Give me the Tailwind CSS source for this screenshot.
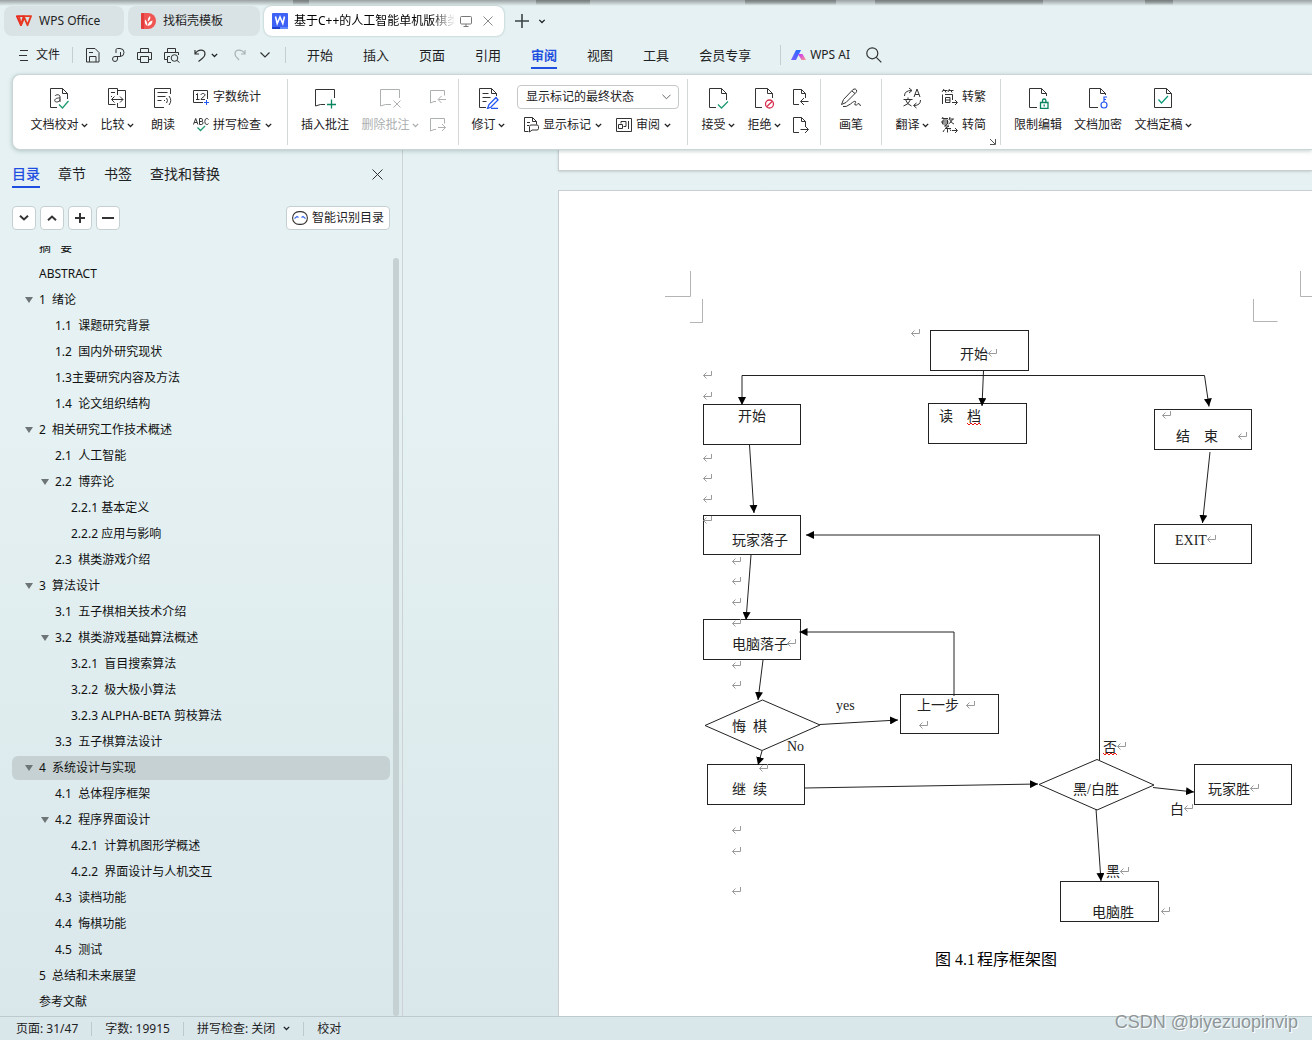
<!DOCTYPE html>
<html lang="zh-CN">
<head>
<meta charset="utf-8">
<title>WPS Office</title>
<script src="https://cdn.jsdelivr.net/npm/@tailwindcss/browser@4"></script>
</head>
<body class="h-screen overflow-hidden flex flex-col bg-linear-to-b from-[#e5f1f2] from-40% to-[#d9e7eb] font-['Noto_Sans','Noto_Sans_CJK_SC',sans-serif] text-xs text-[#1e2224]">

<svg class="hidden" aria-hidden="true">
  <symbol id="chev" viewBox="0 0 7 5"><path d="M.8 .9L3.5 3.5 6.2 .9" fill="none" stroke="currentColor" stroke-width="1.3"/></symbol>
  <symbol id="tri" viewBox="0 0 8 6"><path d="M0 0h8L4 6z" fill="#6d7577"/></symbol>
</svg>

<!-- tab strip -->
<header class="relative shrink-0">
  <div class="absolute inset-x-0 top-0 h-[6px] bg-linear-to-b from-[#9aa1a2] to-transparent" aria-hidden="true"></div>
  <div class="absolute top-0 left-[293px] w-4 h-[5px] bg-linear-to-b from-[#777c7c] to-transparent" aria-hidden="true"></div>
  <div class="absolute top-0 left-[536px] w-[54px] h-[5px] bg-linear-to-b from-[#777c7c] to-transparent" aria-hidden="true"></div>
  <div class="absolute top-0 left-[745px] w-[91px] h-[5px] bg-linear-to-b from-[#777c7c] to-transparent" aria-hidden="true"></div>
  <div class="absolute top-0 left-[875px] w-[168px] h-[5px] bg-linear-to-b from-[#777c7c] to-transparent" aria-hidden="true"></div>
  <div class="absolute top-0 left-[1145px] w-7 h-[5px] bg-linear-to-b from-[#777c7c] to-transparent" aria-hidden="true"></div>
  <div class="relative flex items-center gap-1 pl-1 pt-[6px] h-9">
    <button class="w-[120px] h-[30px] rounded-lg bg-[#d9e2e4] flex items-center gap-[7px] pl-3">
      <svg class="w-4 h-3" viewBox="0 0 16 12" fill="none"><path d="M.8 1.2h7l-2.9 9z" stroke="#e8281f" stroke-width="1.8" stroke-linejoin="round"/><path d="M3 1.2l2 9 3.3-7.5 3.2 7.5L15 1.2H7.4" stroke="#e8381f" stroke-width="1.8" stroke-linejoin="round"/></svg>
      <span>WPS Office</span>
    </button>
    <button class="w-[132px] h-[30px] rounded-lg bg-[#d9e2e4] flex items-center gap-[7px] pl-[13px]">
      <svg class="w-[15px] h-4" viewBox="0 0 15 16"><path d="M1 0h6a8 8 0 0 1 0 16H1a1 1 0 0 1-1-1V1a1 1 0 0 1 1-1z" fill="#ef5552"/><path d="M0 1a1 1 0 0 1 1-1h2v16H1a1 1 0 0 1-1-1z" fill="#e23c3d"/><path d="M6.500 13C3.800 11.500 3.500 9 4 6.500 5.500 7.500 6.300 9 6.500 13z M6.800 13c0-2.500 1.500-5 4.700-5.500C11.500 10.500 10 12.500 6.800 13z M7 8.500c-.6-2 .4-4.200 2-5.500.8 1.700.6 3.300-2 5.500z" fill="#fff"/></svg>
      <span>找稻壳模板</span>
    </button>
    <div class="w-[240px] h-[30px] rounded-lg bg-white shadow-[0_0_2px_rgba(90,120,120,.55)] flex items-center pl-2">
      <svg class="w-4 h-4 shrink-0" viewBox="0 0 16 16"><rect width="16" height="16" rx="1" fill="#3d62f5"/><path d="M0 14h8v2H1a1 1 0 0 1-1-1z" fill="#1c3fd0"/><path d="M8 14h8v1a1 1 0 0 1-1 1H8z" fill="#5f8bff"/><path d="M3.500 3.500l1.700 7L8 4l2.800 6.500 1.700-7" fill="none" stroke="#fff" stroke-width="1.600"/></svg>
      <span class="ml-[6px] w-[161px] overflow-hidden whitespace-nowrap mask-r-from-85% text-black">基于C++的人工智能单机版棋类</span>
      <button class="ml-[5px]" aria-label="窗口"><svg class="w-3 h-3" viewBox="0 0 12 12" fill="none" stroke="#777"><rect x=".5" y="1.500" width="11" height="7.500" rx="1"/><path d="M3.500 11.500h5M6 9v2"/></svg></button>
      <button class="ml-[11px]" aria-label="关闭"><svg class="w-[10px] h-[10px]" viewBox="0 0 10 10" stroke="#8a8a8a" fill="none"><path d="M.5.5l9 9M9.500.5l-9 9"/></svg></button>
    </div>
    <button class="ml-[7px]" aria-label="新建"><svg class="w-[14px] h-[14px]" viewBox="0 0 14 14" stroke="#3d4446" stroke-width="1.600"><path d="M7 0v14M0 7h14"/></svg></button>
    <button class="ml-[5px]" aria-label="更多"><svg class="w-2 h-[5px]"><use href="#chev"/></svg></button>
  </div>
</header>

<!-- menu bar -->
<nav class="shrink-0 h-[38px] flex items-center pl-[19px]">
  <button class="flex items-center gap-2"><svg class="w-[9px] h-3" viewBox="0 0 9 12" stroke="#333" stroke-width="1"><path d="M1 1.500h8M0 6.500h8M1 11.500h8"/></svg><span>文件</span></button>
  <span class="ml-3 w-px h-4 bg-[#c3cfd0]"></span>
  <button class="ml-3" aria-label="保存"><svg class="w-[15px] h-[15px]" viewBox="0 0 15 15" fill="none" stroke="#333"><path d="M1.500.5h8.500l4 4v9.500h-12.500z"/><path d="M4.500 14V8.500h6.500V14M4 4.500h4"/></svg></button>
  <button class="ml-3" aria-label="输出为PDF"><svg class="w-[13px] h-[15px]" viewBox="0 0 13 15" fill="none" stroke="#333"><path d="M4 5V2c0-1 .5-1.500 1.500-1.500H8a4 4 0 0 1 0 8H3a2.500 2.500 0 1 0 2.500 2.500V8.500M8.500 4v4.500"/></svg></button>
  <button class="ml-3" aria-label="打印"><svg class="w-[15px] h-[15px]" viewBox="0 0 15 15" fill="none" stroke="#333"><path d="M3.500 4.500v-4h8v4M3.500 11.500h-3v-7h14v7h-3M3.500 8.500h8v6h-8z"/></svg></button>
  <button class="ml-3" aria-label="打印预览"><svg class="w-4 h-[15px]" viewBox="0 0 16 15" fill="none" stroke="#333"><path d="M3.500 4.500v-4h8v4M3 11.500H.5v-7h14V7M3.500 14.500V8.500H6M3.500 14.500H7"/><circle cx="10.500" cy="10" r="3.300"/><path d="M13 12.500l2.500 2"/></svg></button>
  <button class="ml-[14px]" aria-label="撤销"><svg class="w-3 h-[13px]" viewBox="0 0 12 13" fill="none" stroke="#333" stroke-width="1.200"><path d="M1 1v4h4M1.200 4.800C3 2 5 1.200 7 1.200c5 0 5 5.300 1.500 8L4.500 12.500"/></svg></button>
  <button class="ml-[5px]" aria-label="撤销列表"><svg class="w-[7px] h-[5px]"><use href="#chev"/></svg></button>
  <button class="ml-4" aria-label="恢复"><svg class="w-3 h-[13px]" viewBox="0 0 12 13" fill="none" stroke="#a9b3b4" stroke-width="1.200"><path d="M11 1v4H7M10.800 4.800C9 2 7 1.200 5 1.200c-5 0-5 5.300-1.500 8L5 11"/></svg></button>
  <button class="ml-[14px]" aria-label="自定义"><svg class="w-[10px] h-[6px]" viewBox="0 0 10 6" fill="none" stroke="#333" stroke-width="1.200"><path d="M.5.5L5 5 9.500.5"/></svg></button>
  <span class="ml-[15px] w-px h-4 bg-[#c3cfd0]"></span>
  <div class="ml-[21px] flex gap-[30px] text-[13px] leading-5 pt-1">
    <a href="#" class="h-6">开始</a><a href="#" class="h-6">插入</a><a href="#" class="h-6">页面</a><a href="#" class="h-6">引用</a>
    <a href="#" class="h-6 font-bold text-[#1f4fe0] border-b-2 border-[#1f4fe0]">审阅</a>
    <a href="#" class="h-6">视图</a><a href="#" class="h-6">工具</a><a href="#" class="h-6">会员专享</a>
  </div>
  <span class="ml-[29px] w-px h-5 bg-[#c3cfd0]"></span>
  <button class="ml-[10px] flex items-center gap-1">
    <svg class="w-[15px] h-3" viewBox="0 0 15 12"><defs><linearGradient id="ai1" x1="0" y1="1" x2="1" y2="0"><stop stop-color="#7a5cff"/><stop offset="1" stop-color="#1b6dff"/></linearGradient><linearGradient id="ai2" x1="0" y1="0" x2="1" y2="1"><stop stop-color="#c22cff"/><stop offset="1" stop-color="#ff9b8a"/></linearGradient></defs><path d="M0 11L5 1h5L5 11z" fill="url(#ai1)"/><path d="M7 5h4.500l3.500 6h-4.500z" fill="url(#ai2)"/></svg>
    <span>WPS AI</span></button>
  <button class="ml-4" aria-label="搜索"><svg class="w-4 h-4" viewBox="0 0 16 16" fill="none" stroke="#333" stroke-width="1.200"><circle cx="6.300" cy="6.300" r="5.500"/><path d="M10.300 10.300l5 5"/></svg></button>
</nav>

<!-- ribbon -->
<section class="relative z-10 shrink-0 ml-3 h-[76px] rounded-l-lg bg-white border border-r-0 border-[#c9d5d6] shadow-[0_1px_4px_rgba(80,110,110,.35)] flex items-stretch py-1 overflow-hidden whitespace-nowrap">
  <div class="w-[275px] shrink-0 flex border-r border-[#d4d8d9] pl-[11px]">
    <button class="w-[70px] flex flex-col items-center pt-2 gap-2">
      <svg class="w-[22px] h-[22px] shrink-0" viewBox="0 0 22 22" fill="none" stroke="#333"><path d="M9 20.500H2.500v-19h12l5 5V12M14.500 1.500v5h5"/><path d="M7 9c1-1.800 5-1.800 5 .8V15M12 11c-6-.5-6.500 4-3.500 4 1.500 0 3.500-1 3.500-2.500"/><path d="M11 17.500l3.500 3.500L20.500 14" stroke="#1f9a75" stroke-width="1.300"/></svg>
      <span class="flex items-center gap-[2px]">文档校对<svg class="w-[7px] h-[5px]"><use href="#chev"/></svg></span></button>
    <button class="w-[46px] flex flex-col items-center pt-2 gap-2">
      <svg class="w-[22px] h-[22px] shrink-0" viewBox="0 0 22 22" fill="none" stroke="#333"><path d="M9.500 17.500h-7v-16h9V8M11.500 3.500h8v17h-8V16M5 5.500h4M5 9.500h1"/><path d="M6 12.500h11M8.500 9.500L5.500 12.500l3 3M14 9.500l3 3-3 3"/></svg>
      <span class="flex items-center gap-[2px]">比较<svg class="w-[7px] h-[5px]"><use href="#chev"/></svg></span></button>
    <button class="w-[46px] flex flex-col items-center pt-2 gap-2">
      <svg class="w-[22px] h-[22px] shrink-0" viewBox="0 0 22 22" fill="none" stroke="#333"><path d="M12 20.500H2.500v-19h16V7M5.500 5.500h10M5.500 9.500h8M5.500 13.500h4"/><path d="M12.500 13v1M14.500 11q2 2.500 0 5M17 9q3.500 4.500 0 9"/></svg>
      <span>朗读</span></button>
    <div class="ml-[7px] flex flex-col pt-[6px] gap-1">
      <button class="h-6 flex items-center gap-1"><svg class="w-4 h-4" viewBox="0 0 16 16" fill="none" stroke="#333"><path d="M10 13.500H.5v-12h14V10"/><path d="M3 6l1.500-1.500V11M3 10.500h3.500M8 6c0-2 4-2 4 0 0 1.500-4 3-4 4.500h4"/><path d="M13.500 11v5M11 13.500h5" stroke="#2457f0"/></svg>字数统计</button>
      <button class="h-6 flex items-center gap-1"><svg class="w-4 h-4" viewBox="0 0 16 16" fill="none" stroke="#333"><path d="M.5 7.500L2.700 1.500l2.200 6M1.200 5.500h3M6.500 1.500v6h2.200q1.300-.2 1.300-1.700T8.500 4.500h-2M8.500 4.500q1.200-.3 1-1.700T8.200 1.500H6.500M15.500 2.500q-.6-1-1.700-1-2 0-2 3t2 3q1.200 0 1.700-1"/><path d="M4.500 10.500l3 3 4.500-4.500" stroke="#1f9a75" stroke-width="1.300"/></svg>拼写检查<svg class="w-[7px] h-[5px]"><use href="#chev"/></svg></button>
    </div>
  </div>
  <div class="w-[171px] shrink-0 flex border-r border-[#d4d8d9] pl-[7px]">
    <button class="w-[60px] flex flex-col items-center pt-2 gap-2">
      <svg class="w-[22px] h-[22px] shrink-0" viewBox="0 0 22 22" fill="none" stroke="#333"><path d="M11 17.500H6.500L1.500 19v-16.500h19V11"/><path d="M17.500 12.500v9M13 17.500h9" stroke="#0b8460" stroke-width="1.300"/></svg>
      <span>插入批注</span></button>
    <button class="w-[70px] flex flex-col items-center pt-2 gap-2 text-[#adb0b1]" disabled>
      <svg class="w-[22px] h-[22px] shrink-0" viewBox="0 0 22 22" fill="none" stroke="#adb0b1"><path d="M12 17.500H6.500L1.500 19v-16.500h19V11M14.500 13.500l7 7M21.500 13.500l-7 7"/></svg>
      <span class="flex items-center gap-[2px]">删除批注<svg class="w-[7px] h-[5px]"><use href="#chev"/></svg></span></button>
    <div class="ml-[5px] flex flex-col pt-[6px] gap-1">
      <button class="h-6" aria-label="上一条批注" disabled><svg class="w-4 h-4" viewBox="0 0 16 16" fill="none" stroke="#adb0b1"><path d="M6 12.500H4L.5 14V1.500h14v5M16 10.500H8.500M11.500 7l-3.500 3.500 3.500 3.500"/></svg></button>
      <button class="h-6" aria-label="下一条批注" disabled><svg class="w-4 h-4" viewBox="0 0 16 16" fill="none" stroke="#adb0b1"><path d="M6 12.500H4L.5 14V1.500h14v5M8 10.500h7.500M12 7l3.500 3.500-3.500 3.500"/></svg></button>
    </div>
  </div>
  <div class="w-[229px] shrink-0 flex border-r border-[#d4d8d9] pl-[6px]">
    <button class="w-[46px] flex flex-col items-center pt-2 gap-2">
      <svg class="w-[22px] h-[22px] shrink-0" viewBox="0 0 22 22" fill="none" stroke="#333"><path d="M9 20.500H2.500v-19h12l5 5V9M14.500 1.500v5h5M5.500 6.500h6M5.500 10.500h8M5.500 14.500h4"/><path d="M10.500 21.500l1.500-4 7-7 2 2.500-7 7zM14 21.500h7" stroke="#2457f0" stroke-width="1.300"/></svg>
      <span class="flex items-center gap-[2px]">修订<svg class="w-[7px] h-[5px]"><use href="#chev"/></svg></span></button>
    <div class="ml-[6px] flex flex-col pt-[6px] gap-1">
      <label class="relative block"><select aria-label="标记显示方式" class="block appearance-none w-[162px] h-6 rounded border border-[#c4c8c9] bg-white pl-2 text-xs leading-4"><option>显示标记的最终状态</option></select><svg class="absolute right-2 top-[9px] w-[9px] h-[6px] pointer-events-none" viewBox="0 0 10 6" fill="none" stroke="#555"><path d="M.5.5L5 5 9.500.5"/></svg></label>
      <div class="flex pl-[7px] gap-[14px]">
        <button class="h-6 flex items-center gap-[3px]"><svg class="w-4 h-4" viewBox="0 0 16 16" fill="none" stroke="#333"><path d="M4.500 14.500h-4v-14h8l4 4v3M8.500.5v4h4M3 5.500h3M3 8.500h2M5.500 15V9.500q0-1.500 1.500-1.500h6q1.500 0 1.500 1.500v2q0 1.500-1.500 1.500H8z"/></svg>显示标记<svg class="w-[7px] h-[5px] ml-px"><use href="#chev"/></svg></button>
        <button class="h-6 flex items-center gap-1"><svg class="w-4 h-4" viewBox="0 0 16 16" fill="none" stroke="#333"><path d="M.5 1.500h15v13H.5zM12.500 4v8M5 6.500V4.500h5v5H7.500M2.500 7.500h4v4h-4z"/></svg>审阅<svg class="w-[7px] h-[5px]"><use href="#chev"/></svg></button>
      </div>
    </div>
  </div>
  <div class="w-[133px] shrink-0 flex border-r border-[#d4d8d9] pl-[7px]">
    <button class="w-[46px] flex flex-col items-center pt-2 gap-2">
      <svg class="w-[22px] h-[22px] shrink-0" viewBox="0 0 22 22" fill="none" stroke="#333"><path d="M9 20.500H2.500v-19h12l5 5V13M14.500 1.500v5h5"/><path d="M11 17.500l3.500 3.500L21 14.500" stroke="#1f9a75" stroke-width="1.300"/></svg>
      <span class="flex items-center gap-[2px]">接受<svg class="w-[7px] h-[5px]"><use href="#chev"/></svg></span></button>
    <button class="w-[46px] flex flex-col items-center pt-2 gap-2">
      <svg class="w-[22px] h-[22px] shrink-0" viewBox="0 0 22 22" fill="none" stroke="#333"><path d="M9 20.500H2.500v-19h12l5 5V11M14.500 1.500v5h5"/><g stroke="#d7304f" stroke-width="1.300"><circle cx="16.500" cy="17" r="4"/><path d="M13.700 19.800l5.600-5.600"/></g></svg>
      <span class="flex items-center gap-[2px]">拒绝<svg class="w-[7px] h-[5px]"><use href="#chev"/></svg></span></button>
    <div class="ml-[6px] flex flex-col pt-[6px] gap-1">
      <button class="h-6" aria-label="上一条修订"><svg class="w-4 h-4" viewBox="0 0 16 16" fill="none" stroke="#333"><path d="M6 15.500H.5V.5h8l4 4V9M8.500.5v4h4M15.500 12.500H8M11 9l-3.500 3.500L11 16"/></svg></button>
      <button class="h-6" aria-label="下一条修订"><svg class="w-4 h-4" viewBox="0 0 16 16" fill="none" stroke="#333"><path d="M6 15.500H.5V.5h8l4 4V9M8.500.5v4h4M7.500 12.500H15M12 9l3.500 3.500L12 16"/></svg></button>
    </div>
  </div>
  <div class="w-[61px] shrink-0 flex border-r border-[#d4d8d9] pl-[7px]">
    <button class="w-[46px] flex flex-col items-center pt-2 gap-2">
      <svg class="w-[22px] h-[22px] shrink-0" viewBox="0 0 22 22" fill="none" stroke="#333"><path d="M1.500 17.500l2-5L13 2.500q2.500-1.500 3.500.5 .5 1.500-.5 2.500L6 15.500zM12 4l3 2.500M3 19.500q3 1 7.500-2.500 4-3.500 5-2.500.5 1-.5 2-1 2 1.500 1.500 1-.5 1.500-1.500 2 0 2.500 2.500"/></svg>
      <span>画笔</span></button>
  </div>
  <div class="relative w-[119px] shrink-0 flex border-r border-[#d4d8d9] pl-[7px]">
    <button class="w-[46px] flex flex-col items-center pt-2 gap-2">
      <svg class="w-[22px] h-[22px] shrink-0" viewBox="0 0 22 22" fill="none" stroke="#333"><path d="M3.500 9q0-5.500 7-5.500M8 1l3 2.500L8 6M19.500 13q0 5.500-6.500 5.500M15.500 16L12.500 18.500l3 2.500M13 10l3-8 3 8M14 7.500h4M2.500 12.500h9M7 10.500v2M4.500 12.500q1.500 5 6 6.500M9.500 12.500q-1.500 5-7 6.500"/></svg>
      <span class="flex items-center gap-[2px]">翻译<svg class="w-[7px] h-[5px]"><use href="#chev"/></svg></span></button>
    <div class="ml-[6px] flex flex-col pt-[6px] gap-1">
      <button class="h-6 flex items-center gap-1"><svg class="w-[17px] h-4" viewBox="0 0 17 16" fill="none" stroke="#333"><path d="M3 0L1 3M2 1.500h4.500M4 1.500l1 2M8.500 0L7 3M8 1.500h4.500M10 1.500l1 2M1.500 5.500V15M4 5.500h7.500V11M4.500 8.500h4.500v5h-4.500zM4.500 11h4.500M11 13.500h5M14 11l2.500 2.500L14 16"/></svg>转繁</button>
      <button class="h-6 flex items-center gap-1"><svg class="w-[17px] h-4" viewBox="0 0 17 16" fill="none" stroke="#333"><path d="M2 0L1 2M1.500 1.500H7M2 3h4.500v4H1.500L2 3M0 5h7.500M9 0L8 3M8.500 2H13M11.500 2q-.5 3-4 5M9 3q1 3 4 4M6 7.500L3.500 9H8L4 11.500h6M6.500 11.500v4M3.500 12.500L2 15M9 12.500l1 1.500M11 13.500h5M14 11l2.500 2.500L14 16"/></svg>转简</button>
    </div>
    <svg class="absolute right-1 bottom-0 w-[6px] h-[6px]" viewBox="0 0 6 6" fill="none" stroke="#555"><path d="M0 0l5 5M5.500 0v5.500H0"/></svg>
  </div>
  <div class="shrink-0 flex pl-[7px]">
    <button class="w-[60px] flex flex-col items-center pt-2 gap-2">
      <svg class="w-[22px] h-[22px] shrink-0" viewBox="0 0 22 22" fill="none" stroke="#333"><path d="M10 20.500H2.500v-19h12l5 5V9M14.500 1.500v5h5"/><g stroke="#0b8460" stroke-width="1.300"><path d="M13.500 15.500h7.500v6h-7.500zM15.500 15.500v-2q0-1.500 1.700-1.500t1.700 1.500v2M17.200 17.500v2"/></g></svg>
      <span>限制编辑</span></button>
    <button class="w-[60px] flex flex-col items-center pt-2 gap-2">
      <svg class="w-[22px] h-[22px] shrink-0" viewBox="0 0 22 22" fill="none" stroke="#333"><path d="M11 20.500H2.500v-19h11l5 5V8M13.500 1.500v5h5"/><g stroke="#2457f0" stroke-width="1.200"><circle cx="17" cy="18" r="3"/><path d="M17 15v-5h3M17 12.500h2"/></g></svg>
      <span>文档加密</span></button>
    <button class="w-[70px] flex flex-col items-center pt-2 gap-2">
      <svg class="w-[22px] h-[22px] shrink-0" viewBox="0 0 22 22" fill="none" stroke="#333"><path d="M2.500 1.500h12l5 5v14h-17zM14.500 1.500v5h5"/><path d="M6.500 12.500l3 3.500 6.500-7" stroke="#0b9a75" stroke-width="1.200"/></svg>
      <span class="flex items-center gap-[2px]">文档定稿<svg class="w-[7px] h-[5px]"><use href="#chev"/></svg></span></button>
  </div>
</section>

<main class="flex-1 min-h-0 flex">
  <!-- outline pane -->
  <aside class="w-[403px] shrink-0 border-r border-[#cdd3d5] flex flex-col">
    <div class="flex items-start pt-3 pl-3 pr-[19px] text-sm">
      <div class="flex gap-[18px] leading-6">
        <a href="#" class="h-[26px] text-[#1f4fe0] font-medium border-b-2 border-[#1f4fe0]">目录</a>
        <a href="#">章节</a><a href="#">书签</a><a href="#">查找和替换</a>
      </div>
      <button class="ml-auto mt-[7px]" aria-label="关闭窗格"><svg class="w-[11px] h-[11px]" viewBox="0 0 11 11" stroke="#333" fill="none"><path d="M.5.5l10 10M10.500.5l-10 10"/></svg></button>
    </div>
    <div class="flex items-center gap-1 pl-3 pr-3 mt-[18px]">
      <button aria-label="展开" class="w-6 h-6 rounded border border-[#c6d0d2] bg-white grid place-items-center"><svg class="w-[10px] h-[6px]" viewBox="0 0 10 6" fill="none" stroke="#333" stroke-width="2"><path d="M1 .8L5 4.500 9 .8"/></svg></button>
      <button aria-label="收起" class="w-6 h-6 rounded border border-[#c6d0d2] bg-white grid place-items-center"><svg class="w-[10px] h-[6px]" viewBox="0 0 10 6" fill="none" stroke="#333" stroke-width="2"><path d="M1 5.200L5 1.500 9 5.200"/></svg></button>
      <button aria-label="增加级别" class="w-6 h-6 rounded border border-[#c6d0d2] bg-white grid place-items-center"><svg class="w-[10px] h-[10px]" viewBox="0 0 10 10" stroke="#333" stroke-width="2"><path d="M5 0v10M0 5h10"/></svg></button>
      <button aria-label="减少级别" class="w-6 h-6 rounded border border-[#c6d0d2] bg-white grid place-items-center"><svg class="w-3 h-[10px]" viewBox="0 0 12 10" stroke="#333" stroke-width="2"><path d="M0 5h12"/></svg></button>
      <button class="ml-auto h-6 rounded border border-[#c6d0d2] bg-white px-[5px] flex items-center gap-1"><svg class="w-4 h-[14px]" viewBox="0 0 16 14" fill="none"><rect x=".6" y=".6" width="14.800" height="12.800" rx="6.400" stroke="#333" stroke-width="1.100"/><path d="M2.500 7.500L5 5.500l1.500 1M13.500 7.500L11 5.500l-1.500 1" stroke="#3c6cf0" stroke-width="1.200"/></svg>智能识别目录</button>
    </div>
    <div class="relative flex-1 min-h-0 mt-4 overflow-hidden">
      <ul class="-mt-[11px] pl-3 pr-3 leading-6 text-[#111] [&_a]:whitespace-pre">
        <li class="h-[26px] py-px"><a href="#" class="block pl-[27px]">摘   要</a></li>
        <li class="h-[26px] py-px"><a href="#" class="block pl-[27px]">ABSTRACT</a></li>
        <li class="h-[26px] py-px"><a href="#" class="flex items-center gap-[6px] pl-[13px]"><svg class="w-2 h-[6px]"><use href="#tri"/></svg>1  绪论</a></li>
        <li class="h-[26px] py-px"><a href="#" class="block pl-[43px]">1.1  课题研究背景</a></li>
        <li class="h-[26px] py-px"><a href="#" class="block pl-[43px]">1.2  国内外研究现状</a></li>
        <li class="h-[26px] py-px"><a href="#" class="block pl-[43px]">1.3主要研究内容及方法</a></li>
        <li class="h-[26px] py-px"><a href="#" class="block pl-[43px]">1.4  论文组织结构</a></li>
        <li class="h-[26px] py-px"><a href="#" class="flex items-center gap-[6px] pl-[13px]"><svg class="w-2 h-[6px]"><use href="#tri"/></svg>2  相关研究工作技术概述</a></li>
        <li class="h-[26px] py-px"><a href="#" class="block pl-[43px]">2.1  人工智能</a></li>
        <li class="h-[26px] py-px"><a href="#" class="flex items-center gap-[6px] pl-[29px]"><svg class="w-2 h-[6px]"><use href="#tri"/></svg>2.2  博弈论</a></li>
        <li class="h-[26px] py-px"><a href="#" class="block pl-[59px]">2.2.1 基本定义</a></li>
        <li class="h-[26px] py-px"><a href="#" class="block pl-[59px]">2.2.2 应用与影响</a></li>
        <li class="h-[26px] py-px"><a href="#" class="block pl-[43px]">2.3  棋类游戏介绍</a></li>
        <li class="h-[26px] py-px"><a href="#" class="flex items-center gap-[6px] pl-[13px]"><svg class="w-2 h-[6px]"><use href="#tri"/></svg>3  算法设计</a></li>
        <li class="h-[26px] py-px"><a href="#" class="block pl-[43px]">3.1  五子棋相关技术介绍</a></li>
        <li class="h-[26px] py-px"><a href="#" class="flex items-center gap-[6px] pl-[29px]"><svg class="w-2 h-[6px]"><use href="#tri"/></svg>3.2  棋类游戏基础算法概述</a></li>
        <li class="h-[26px] py-px"><a href="#" class="block pl-[59px]">3.2.1  盲目搜索算法</a></li>
        <li class="h-[26px] py-px"><a href="#" class="block pl-[59px]">3.2.2  极大极小算法</a></li>
        <li class="h-[26px] py-px"><a href="#" class="block pl-[59px]">3.2.3 ALPHA-BETA 剪枝算法</a></li>
        <li class="h-[26px] py-px"><a href="#" class="block pl-[43px]">3.3  五子棋算法设计</a></li>
        <li class="h-[26px] py-px"><a href="#" aria-current="true" class="flex items-center gap-[6px] pl-[13px] rounded-md bg-[#c6d1d3]"><svg class="w-2 h-[6px]"><use href="#tri"/></svg>4  系统设计与实现</a></li>
        <li class="h-[26px] py-px"><a href="#" class="block pl-[43px]">4.1  总体程序框架</a></li>
        <li class="h-[26px] py-px"><a href="#" class="flex items-center gap-[6px] pl-[29px]"><svg class="w-2 h-[6px]"><use href="#tri"/></svg>4.2  程序界面设计</a></li>
        <li class="h-[26px] py-px"><a href="#" class="block pl-[59px]">4.2.1  计算机图形学概述</a></li>
        <li class="h-[26px] py-px"><a href="#" class="block pl-[59px]">4.2.2  界面设计与人机交互</a></li>
        <li class="h-[26px] py-px"><a href="#" class="block pl-[43px]">4.3  读档功能</a></li>
        <li class="h-[26px] py-px"><a href="#" class="block pl-[43px]">4.4  悔棋功能</a></li>
        <li class="h-[26px] py-px"><a href="#" class="block pl-[43px]">4.5  测试</a></li>
        <li class="h-[26px] py-px"><a href="#" class="block pl-[27px]">5  总结和未来展望</a></li>
        <li class="h-[26px] py-px"><a href="#" class="block pl-[27px]">参考文献</a></li>
      </ul>
      <div class="absolute right-[3px] top-3 bottom-0 w-[6px] rounded-full bg-[#c6d1d3]" aria-hidden="true"></div>
    </div>
  </aside>

  <!-- document -->
  <div class="flex-1 min-w-0 flex flex-col pl-[155px] overflow-hidden">
    <div class="shrink-0 h-[21px] bg-white border-l border-b border-[#c9cfd1] shadow-sm"></div>
    <article class="mt-[19px] flex-1 min-h-0 overflow-hidden bg-white border-l border-t border-[#c9cfd1]">
      <svg class="block w-[754px] h-[825px] font-['Liberation_Serif','Noto_Sans_CJK_SC',serif]" viewBox="559 191 754 825" role="img" aria-label="程序框架图">
        <defs>
          <marker id="arrow" markerUnits="userSpaceOnUse" markerWidth="9" markerHeight="8" refX="8" refY="4" orient="auto"><path d="M0 0l8 4-8 4z"/></marker>
          <path id="ret" d="M8.500-4v4.500H.5M3.500-2.500L.5.500l3 3" fill="none" stroke="#9a9a9a"/>
        </defs>
        <g fill="none" stroke="#b4b4b4">
          <path d="M690.500 271v25.500H665M702.500 299v23.500H690M1253.500 299v22.500h24M1300.500 271v25.500H1313"/>
        </g>
        <g fill="none" stroke="#222">
          <rect x="930.500" y="330.500" width="98" height="40"/>
          <rect x="703.500" y="404.500" width="97" height="40"/>
          <rect x="928.500" y="403.500" width="98" height="40"/>
          <rect x="1154.500" y="409.500" width="97" height="40"/>
          <rect x="1154.500" y="524.500" width="97" height="39"/>
          <rect x="703.500" y="515.500" width="97" height="39"/>
          <rect x="703.500" y="619.500" width="97" height="40"/>
          <rect x="707.500" y="764.500" width="97" height="40"/>
          <rect x="900.500" y="694.500" width="98" height="39"/>
          <rect x="1194.500" y="764.500" width="97" height="40"/>
          <rect x="1060.500" y="881.500" width="98" height="40"/>
          <path d="M705 725.500L762.500 700 820 725 762 750.500zM1039 784.500L1097 759.500 1154 785 1097 810z"/>
          <g>
            <path marker-end="url(#arrow)" d="M980 375.500H742v29.500"/>
            <path marker-end="url(#arrow)" d="M980 375.500h224.500l4.500 31"/>
            <path marker-end="url(#arrow)" d="M983.500 371L982 406"/>
            <path marker-end="url(#arrow)" d="M749.500 445l4.500 68"/>
            <path marker-end="url(#arrow)" d="M1210 452l-7.500 71"/>
            <path marker-end="url(#arrow)" d="M751 555l-5 65"/>
            <path marker-end="url(#arrow)" d="M763 660l-5 40"/>
            <path marker-end="url(#arrow)" d="M762 751l-4 14"/>
            <path marker-end="url(#arrow)" d="M820 724.500l78-4.500"/>
            <path marker-end="url(#arrow)" d="M954 696v-64H799.500"/>
            <path marker-end="url(#arrow)" d="M1099.500 760V535H806"/>
            <path marker-end="url(#arrow)" d="M805 788l233-4"/>
            <path marker-end="url(#arrow)" d="M1153 787.500l41 4.500"/>
            <path marker-end="url(#arrow)" d="M1096 809l5 72"/>
          </g>
        </g>
        <g>
          <use href="#ret" x="911" y="333"/><use href="#ret" x="703" y="375"/><use href="#ret" x="703" y="396"/><use href="#ret" x="703" y="458"/><use href="#ret" x="703" y="478"/><use href="#ret" x="703" y="499"/><use href="#ret" x="703" y="520"/>
          <use href="#ret" x="732" y="561"/><use href="#ret" x="732" y="581"/><use href="#ret" x="732" y="602"/><use href="#ret" x="732" y="623"/><use href="#ret" x="732" y="665"/><use href="#ret" x="732" y="685"/><use href="#ret" x="732" y="830"/><use href="#ret" x="732" y="851"/><use href="#ret" x="732" y="891"/>
          <use href="#ret" x="988" y="353"/><use href="#ret" x="787" y="643"/><use href="#ret" x="966" y="705"/><use href="#ret" x="919" y="725"/><use href="#ret" x="759" y="768"/>
          <use href="#ret" x="1162" y="415"/><use href="#ret" x="1238" y="436"/><use href="#ret" x="1207" y="539"/><use href="#ret" x="1117" y="746"/><use href="#ret" x="1184" y="808"/><use href="#ret" x="1250" y="788"/><use href="#ret" x="1120" y="871"/><use href="#ret" x="1161" y="911"/>
        </g>
        <g class="text-sm" fill="#222">
          <text x="960" y="359">开始</text>
          <text x="738" y="421">开始</text>
          <text x="939" y="421">读</text><text x="967" y="421">档</text>
          <text x="1176" y="441">结</text><text x="1204" y="441">束</text>
          <text x="1175" y="545">EXIT</text>
          <text x="732" y="545">玩家落子</text>
          <text x="732" y="649">电脑落子</text>
          <text x="732" y="731">悔</text><text x="753" y="731">棋</text>
          <text x="836" y="710">yes</text>
          <text x="787" y="751">No</text>
          <text x="917" y="710">上一步</text>
          <text x="732" y="794">继</text><text x="753" y="794">续</text>
          <text x="1073" y="794">黑/白胜</text>
          <text x="1208" y="794">玩家胜</text>
          <text x="1103" y="752">否</text>
          <text x="1170" y="814">白</text>
          <text x="1106" y="876">黑</text>
          <text x="1092" y="917">电脑胜</text>
        </g>
        <path d="M967 423l2 2 2-2 2 2 2-2 2 2 2-2 2 2M1103 753l2 2 2-2 2 2 2-2 2 2 2-2 2 2" fill="none" stroke="#e11"/>
        <g class="text-base" fill="#000"><text x="935" y="965">图 4.1</text><text x="977" y="965">程序框架图</text></g>
      </svg>
    </article>
  </div>
</main>

<!-- status bar -->
<footer class="relative shrink-0 h-6 border-t border-[#bccacd] flex items-center pl-4">
  <span>页面: 31/47</span><span class="mx-[13px] w-px h-[14px] bg-[#bccacd]"></span>
  <span>字数: 19915</span><span class="mx-[13px] w-px h-[14px] bg-[#bccacd]"></span>
  <button class="flex items-center gap-2">拼写检查: 关闭<svg class="w-[7px] h-[5px]"><use href="#chev"/></svg></button><span class="mx-[13px] w-px h-[14px] bg-[#bccacd]"></span>
  <span>校对</span>
  <span class="absolute right-[14px] bottom-2 font-['Liberation_Sans',sans-serif] text-lg leading-5 text-[#8f9698] [text-shadow:1px_1px_0_#fff]">CSDN @biyezuopinvip</span>
</footer>
</body>
</html>
